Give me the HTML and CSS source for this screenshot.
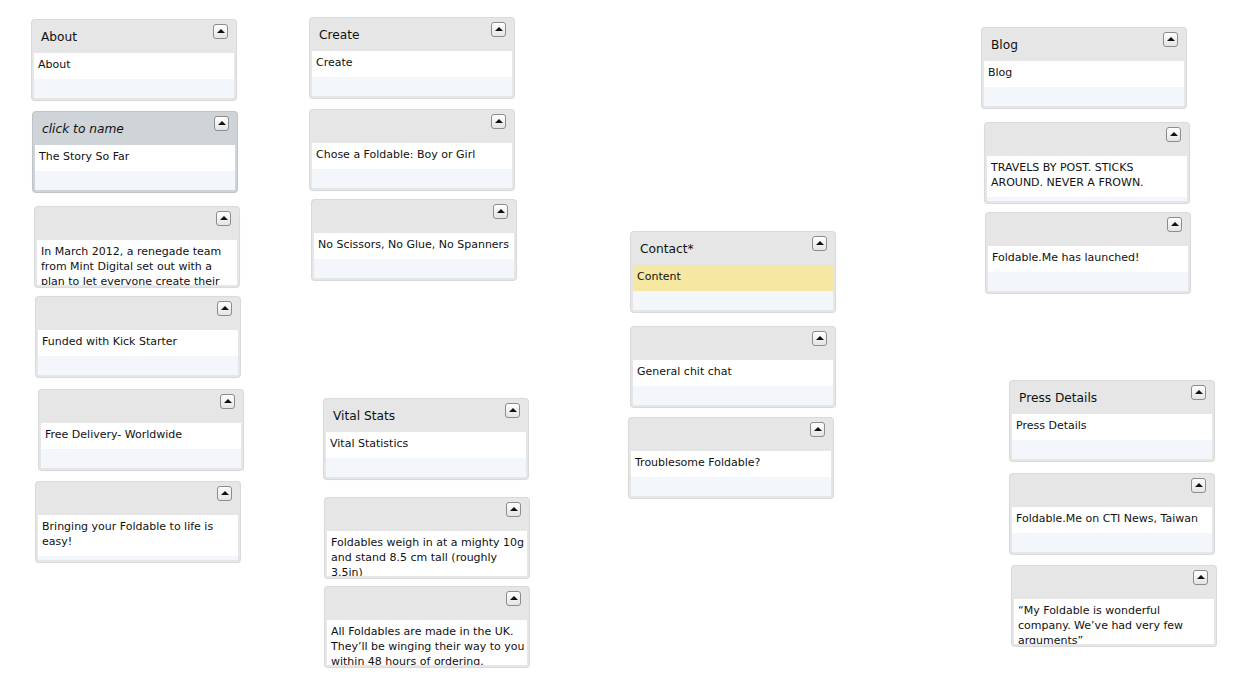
FILE: index.html
```html
<!DOCTYPE html>
<html lang="en">
<head>
<meta charset="utf-8">
<title>Foldable.Me sitemap</title>
<link rel="stylesheet" href="styles.css">
</head>
<body>
<main class="canvas">
  <section class="card" style="left:31px;top:19px"><header class="card-head"><h2 class="title">About</h2><button class="toggle" aria-label="collapse"></button></header><div class="card-body"><p class="text">About</p></div></section>
  <section class="card selected" style="left:32px;top:111px"><header class="card-head"><h2 class="title placeholder">click to name</h2><button class="toggle" aria-label="collapse"></button></header><div class="card-body"><p class="text">The Story So Far</p></div></section>
  <section class="card" style="left:34px;top:206px"><header class="card-head"><h2 class="title"></h2><button class="toggle" aria-label="collapse"></button></header><div class="card-body"><p class="text lines">In March 2012, a renegade team<br>from Mint Digital set out with a<br>plan to let everyone create their<br>own Foldable.</p></div></section>
  <section class="card" style="left:35px;top:296px"><header class="card-head"><h2 class="title"></h2><button class="toggle" aria-label="collapse"></button></header><div class="card-body"><p class="text">Funded with Kick Starter</p></div></section>
  <section class="card" style="left:38px;top:389px"><header class="card-head"><h2 class="title"></h2><button class="toggle" aria-label="collapse"></button></header><div class="card-body"><p class="text">Free Delivery- Worldwide</p></div></section>
  <section class="card" style="left:35px;top:481px"><header class="card-head"><h2 class="title"></h2><button class="toggle" aria-label="collapse"></button></header><div class="card-body"><p class="text lines">Bringing your Foldable to life is<br>easy!</p></div></section>

  <section class="card" style="left:309px;top:17px"><header class="card-head"><h2 class="title">Create</h2><button class="toggle" aria-label="collapse"></button></header><div class="card-body"><p class="text">Create</p></div></section>
  <section class="card" style="left:309px;top:109px"><header class="card-head"><h2 class="title"></h2><button class="toggle" aria-label="collapse"></button></header><div class="card-body"><p class="text">Chose a Foldable: Boy or Girl</p></div></section>
  <section class="card" style="left:311px;top:199px"><header class="card-head"><h2 class="title"></h2><button class="toggle" aria-label="collapse"></button></header><div class="card-body"><p class="text lines">No Scissors, No Glue, No Spanners</p></div></section>
  <section class="card" style="left:323px;top:398px"><header class="card-head"><h2 class="title">Vital Stats</h2><button class="toggle" aria-label="collapse"></button></header><div class="card-body"><p class="text">Vital Statistics</p></div></section>
  <section class="card" style="left:324px;top:497px"><header class="card-head"><h2 class="title"></h2><button class="toggle" aria-label="collapse"></button></header><div class="card-body"><p class="text lines">Foldables weigh in at a mighty 10g<br>and stand 8.5 cm tall (roughly<br>3.5in)</p></div></section>
  <section class="card" style="left:324px;top:586px"><header class="card-head"><h2 class="title"></h2><button class="toggle" aria-label="collapse"></button></header><div class="card-body"><p class="text lines">All Foldables are made in the UK.<br>They’ll be winging their way to you<br>within 48 hours of ordering.</p></div></section>

  <section class="card" style="left:630px;top:231px"><header class="card-head"><h2 class="title">Contact*</h2><button class="toggle" aria-label="collapse"></button></header><div class="card-body"><p class="text highlight">Content</p></div></section>
  <section class="card" style="left:630px;top:326px"><header class="card-head"><h2 class="title"></h2><button class="toggle" aria-label="collapse"></button></header><div class="card-body"><p class="text">General chit chat</p></div></section>
  <section class="card" style="left:628px;top:417px"><header class="card-head"><h2 class="title"></h2><button class="toggle" aria-label="collapse"></button></header><div class="card-body"><p class="text">Troublesome Foldable?</p></div></section>

  <section class="card" style="left:981px;top:27px"><header class="card-head"><h2 class="title">Blog</h2><button class="toggle" aria-label="collapse"></button></header><div class="card-body"><p class="text">Blog</p></div></section>
  <section class="card" style="left:984px;top:122px"><header class="card-head"><h2 class="title"></h2><button class="toggle" aria-label="collapse"></button></header><div class="card-body"><p class="text lines">TRAVELS BY POST. STICKS<br>AROUND. NEVER A FROWN.</p></div></section>
  <section class="card" style="left:985px;top:212px"><header class="card-head"><h2 class="title"></h2><button class="toggle" aria-label="collapse"></button></header><div class="card-body"><p class="text">Foldable.Me has launched!</p></div></section>
  <section class="card" style="left:1009px;top:380px"><header class="card-head"><h2 class="title">Press Details</h2><button class="toggle" aria-label="collapse"></button></header><div class="card-body"><p class="text">Press Details</p></div></section>
  <section class="card" style="left:1009px;top:473px"><header class="card-head"><h2 class="title"></h2><button class="toggle" aria-label="collapse"></button></header><div class="card-body"><p class="text">Foldable.Me on CTI News, Taiwan</p></div></section>
  <section class="card" style="left:1011px;top:565px"><header class="card-head"><h2 class="title"></h2><button class="toggle" aria-label="collapse"></button></header><div class="card-body"><p class="text lines">“My Foldable is wonderful<br>company. We’ve had very few<br>arguments”</p></div></section>
</main>
</body>
</html>
```

FILE: styles.css
```css
* { box-sizing: border-box; }

html, body {
  margin: 0;
  padding: 0;
  background: #ffffff;
}

body {
  font-family: "DejaVu Sans", Verdana, sans-serif;
  color: #111111;
}

.canvas {
  position: relative;
  width: 1237px;
  height: 698px;
  overflow: hidden;
}

.card {
  position: absolute;
  width: 206px;
  height: 82px;
  display: flex;
  flex-direction: column;
  padding: 0 2px 2px;
  background: #e6e6e6;
  border: 1px solid #dadada;
  border-radius: 4px;
  box-shadow: 0 0 1px rgba(0, 0, 0, 0.08);
  overflow: hidden;
}

.card.selected {
  background: #cfd4d8;
  border-color: #bfc4c8;
}

.card-head {
  height: 33px;
  flex: none;
  display: flex;
  align-items: flex-start;
  justify-content: space-between;
  padding: 4px 6px 0 7px;
}

.title {
  margin: 0;
  padding-top: 5px;
  font-size: 12.2px;
  line-height: 16px;
  font-weight: normal;
  color: #111111;
}

.title.placeholder {
  font-style: italic;
}

.toggle {
  width: 15px;
  height: 15px;
  padding: 0;
  margin: 0;
  flex: none;
  display: flex;
  align-items: center;
  justify-content: center;
  border: 1px solid #8c8c8c;
  border-radius: 3px;
  background: linear-gradient(#ffffff, #e4e4e4);
  box-shadow: inset 0 1px 0 #ffffff;
  cursor: pointer;
}

.toggle::before {
  content: "";
  display: block;
  width: 0;
  height: 0;
  margin-top: -1px;
  border-left: 4px solid transparent;
  border-right: 4px solid transparent;
  border-bottom: 4px solid #111111;
}

.card-body {
  flex: 1;
  min-height: 0;
  background: #f3f6fb;
  overflow: hidden;
}

.text {
  margin: 0;
  padding: 4px 0 7px 4px;
  background: #ffffff;
  font-size: 11px;
  line-height: 15px;
  color: #111111;
}

.text.lines {
  white-space: nowrap;
}

.text.highlight {
  background: #f6e7a2;
}
```
